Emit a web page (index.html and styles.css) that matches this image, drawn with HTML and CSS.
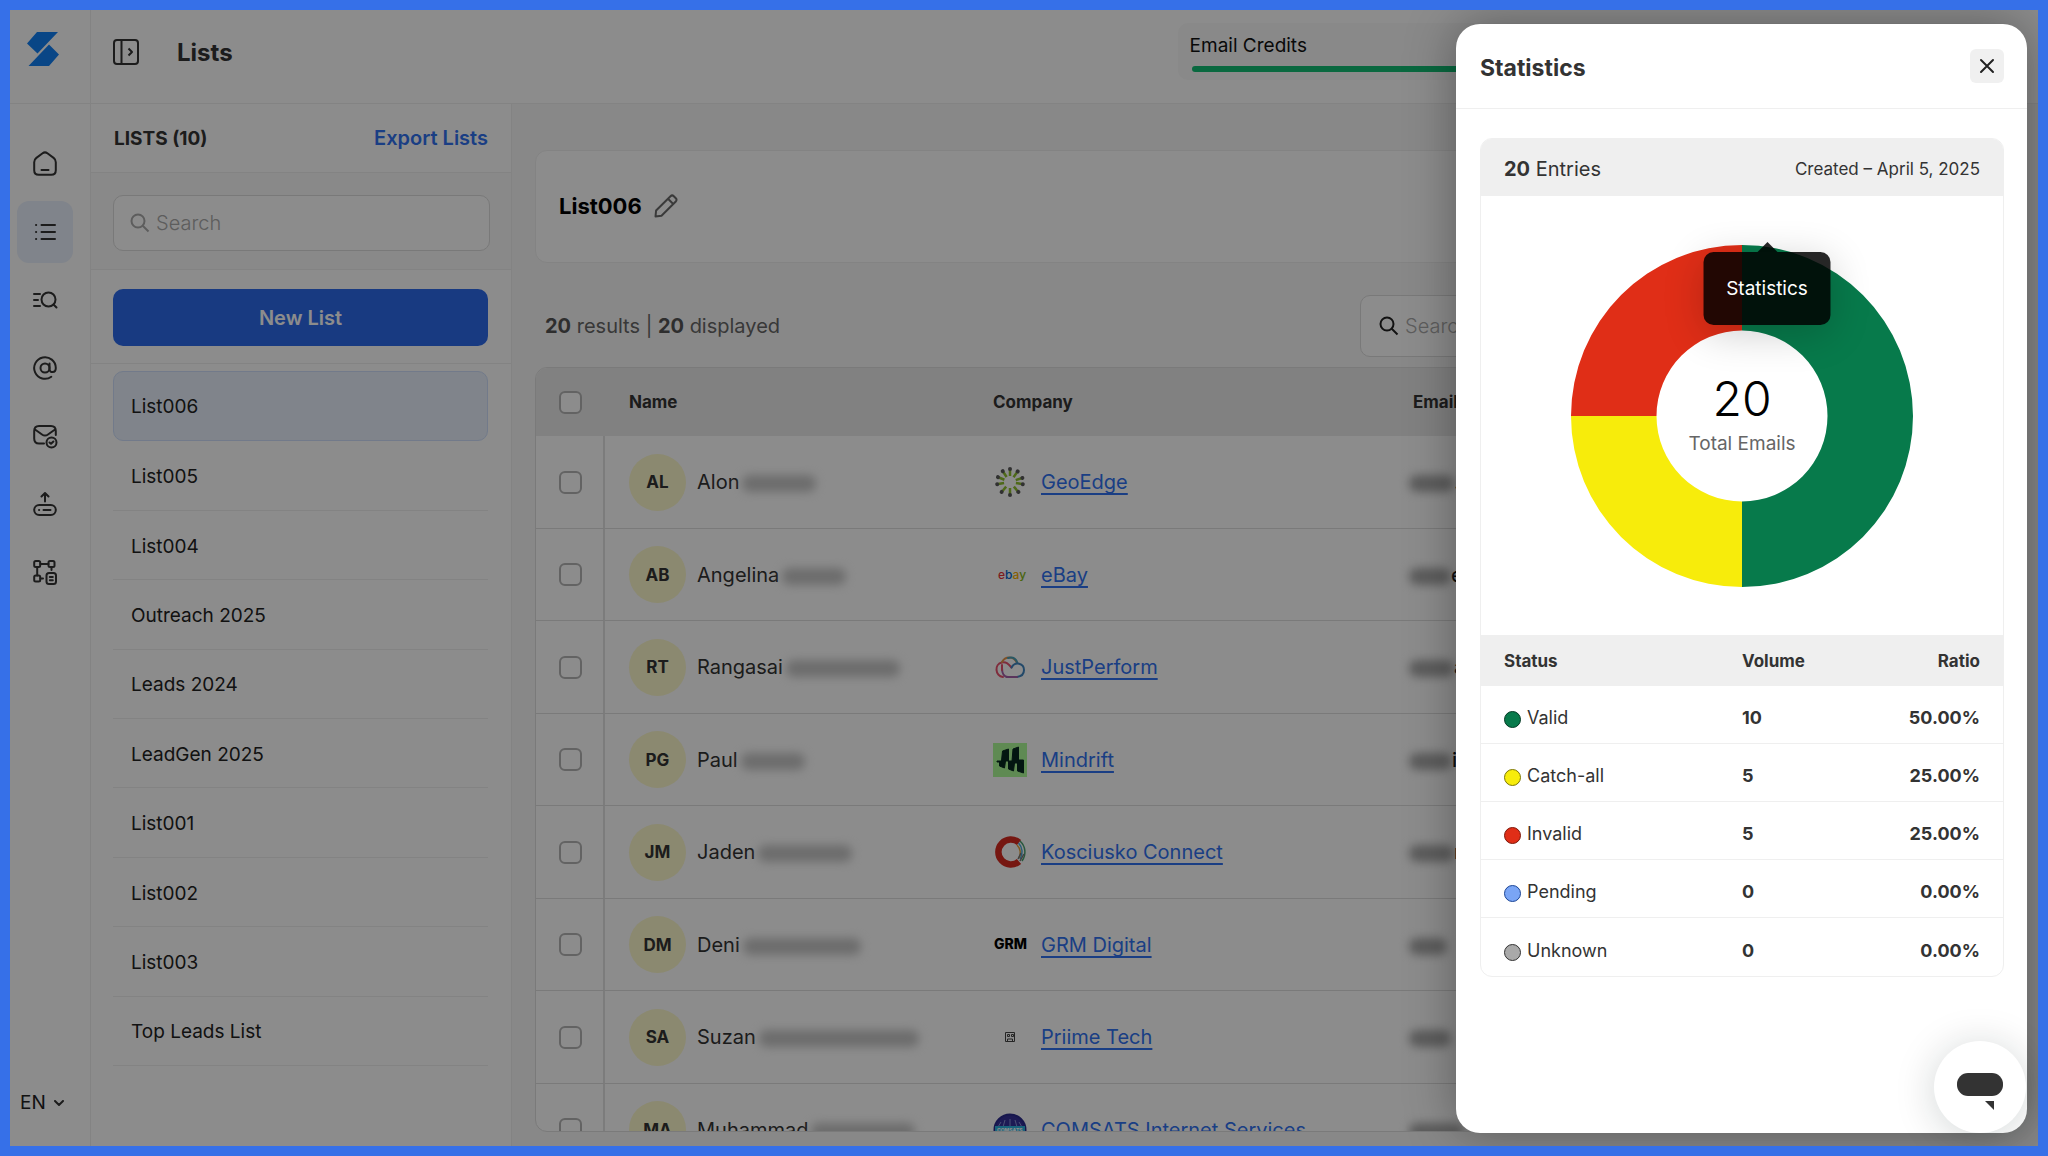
FILE: index.html
```html
<!DOCTYPE html>
<html lang="en">
<head>
<meta charset="utf-8">
<meta name="viewport" content="width=device-width, initial-scale=1">
<title>Lists</title>
<link rel="stylesheet" href="styles.css">
</head>
<body>
<div class="app">
  <aside class="rail">
    <a class="logo" href="#" aria-label="Home page">
      <svg width="32" height="34" viewBox="0 0 32 34"><path d="M10 0H31L10.500 21.500L0 11.500ZM22 12.500L32 22.500L22 34H1.500Z" fill="#1280f5"/></svg>
    </a>
    <nav class="rail-nav" aria-label="Main">
      <a href="#" class="rail-link" aria-label="Dashboard"><svg class="icon" viewBox="0 0 24 24"><path d="M1.200 10.200c0-2 .6-3 2.200-4.300L9.600 1.300c1.600-1.200 3.200-1.200 4.800 0l6.200 4.600c1.600 1.300 2.200 2.300 2.200 4.300v8c0 3-1.600 4.600-4.600 4.600H5.800c-3 0-4.600-1.600-4.600-4.600ZM8.500 18h7"/></svg></a>
      <a href="#" class="rail-link active" aria-label="Lists"><svg class="icon" viewBox="0 0 24 24"><path d="M8.500 5h13.500M8.500 12h13.500M8.500 19h13.500M3 5h.2M3 12h.2M3 19h.2"/></svg></a>
      <a href="#" class="rail-link" aria-label="Search"><svg class="icon" viewBox="0 0 24 24"><circle cx="15.500" cy="11.500" r="7"/><path d="M20.500 16.500l3 3M1 6h6M1 12h4M1 18h6"/></svg></a>
      <a href="#" class="rail-link" aria-label="Email finder"><svg class="icon" viewBox="0 0 24 24"><circle cx="12" cy="12" r="4.500"/><path d="M16.500 7.500v5.500c0 4.300 6.300 4.300 6.300-1A10.800 10.800 0 1 0 18.300 20.800"/></svg></a>
      <a href="#" class="rail-link" aria-label="Email verifier"><svg class="icon" viewBox="0 0 24 24"><path d="M11 19.500H6c-3 0-4.800-1.500-4.800-5V7c0-3.500 1.800-5 4.800-5h12c3 0 4.800 1.500 4.800 5v4M2 5.500l7 5c2 1.400 4 1.400 6 0l7-5"/><circle cx="18.500" cy="18.500" r="5"/><path d="M16.500 18.500l1.500 1.300 2.400-2.300"/></svg></a>
      <a href="#" class="rail-link" aria-label="Import"><svg class="icon" viewBox="0 0 24 24"><rect x="1.200" y="13" width="21.600" height="10" rx="5"/><path d="M10.500 18h7M6 18h.2M12 9.500V1.500M8.500 4.500L12 1l3.500 3.500"/></svg></a>
      <a href="#" class="rail-link" aria-label="Integrations"><svg class="icon" viewBox="0 0 24 24"><rect x="1.200" y="1" width="6" height="6" rx="1.500"/><rect x="15.500" y="1" width="6" height="6" rx="1.500"/><rect x="1.200" y="15.500" width="6" height="6" rx="1.500"/><rect x="13.500" y="13" width="9.500" height="11" rx="2.500"/><path d="M7.500 4h8M4.200 7.500v8M18.500 7.500V10M7.500 18.500H10M16.800 17h3M16.800 20.200h3"/></svg></a>
    </nav>
    <button class="language" type="button">EN <svg width="10" height="6" viewBox="0 0 10 6"><path d="M1 1l4 4 4-4" fill="none" stroke="#333" stroke-width="2" stroke-linecap="round"/></svg></button>
  </aside>

  <header class="topbar">
    <button class="collapse" type="button" aria-label="Expand sidebar"><svg width="26" height="26" viewBox="0 0 26 26" fill="none" stroke="#333" stroke-width="2" stroke-linejoin="round"><rect x="1" y="1" width="24" height="24" rx="3"/><path d="M8.500 1v24M15.500 9.500l3.500 3.500-3.500 3.500"/></svg></button>
    <h1>Lists</h1>
    <div class="credits"><span>Email Credits</span><div class="meter"></div></div>
  </header>

  <section class="lists">
    <div class="lists-head"><h2>LISTS (10)</h2><a href="#">Export Lists</a></div>
    <div class="lists-search">
      <label class="field"><svg width="20" height="20" viewBox="0 0 20 20" fill="none" stroke="#aaa" stroke-width="2"><circle cx="8" cy="8" r="6.500"/><path d="M12.500 12.500l6 6"/></svg><input type="search" placeholder="Search" aria-label="Search lists"></label>
    </div>
    <div class="lists-new"><button type="button">New List</button></div>
    <ul class="list-items">
      <li class="selected"><a href="#">List006</a></li>
      <li><a href="#">List005</a></li>
      <li><a href="#">List004</a></li>
      <li><a href="#">Outreach 2025</a></li>
      <li><a href="#">Leads 2024</a></li>
      <li><a href="#">LeadGen 2025</a></li>
      <li><a href="#">List001</a></li>
      <li><a href="#">List002</a></li>
      <li><a href="#">List003</a></li>
      <li><a href="#">Top Leads List</a></li>
    </ul>
  </section>

  <main class="content">
    <div class="list-title">
      <h2>List006</h2>
      <button type="button" aria-label="Rename list"><svg width="24" height="24" viewBox="0 0 24 24" fill="none" stroke="#6b6b6b" stroke-width="2" stroke-linejoin="round"><path d="M1.500 22.500l.6-6L16.500 2.200c1-1 2.300-1 3.300 0l2 2c1 1 1 2.300 0 3.300L7.500 21.800ZM14 4.800l5.200 5.200"/></svg></button>
    </div>
    <div class="toolbar">
      <p><b>20</b> results | <b>20</b> displayed</p>
      <label class="field field-tall"><svg width="20" height="20" viewBox="0 0 20 20" fill="none" stroke="#222" stroke-width="2"><circle cx="8" cy="8" r="6.500"/><path d="M12.500 12.500l6 6"/></svg><input type="search" placeholder="Search" aria-label="Search results"></label>
    </div>
    <div class="table-box">
      <table class="contacts">
        <thead><tr><th class="c-check"><input type="checkbox" aria-label="Select all"></th><th class="c-name">Name</th><th class="c-company">Company</th><th class="c-email">Email</th></tr></thead>
        <tbody>
          <tr><td class="c-check"><input type="checkbox" aria-label="Select Alon"></td>
            <td><div class="person"><span class="avatar">AL</span><span>Alon</span><i class="redacted" style="width:74px"></i></div></td>
            <td><div class="company"><svg width="34" height="34" viewBox="-17 -17 34 34"><g id="ray"><path d="M0-6V-12" stroke="#8fbf2f" stroke-width="2.500"/><circle cy="-13" r="2" fill="#5a5a5a"/></g><use href="#ray" transform="rotate(36)"/><use href="#ray" transform="rotate(72)"/><use href="#ray" transform="rotate(100)"/><use href="#ray" transform="rotate(140)"/><use href="#ray" transform="rotate(180)"/><use href="#ray" transform="rotate(220)"/><use href="#ray" transform="rotate(260)"/><use href="#ray" transform="rotate(292)"/><use href="#ray" transform="rotate(326)"/></svg><a href="#">GeoEdge</a></div></td>
            <td><div class="email"><i class="redacted" style="width:45px"></i>.</div></td></tr>
          <tr><td class="c-check"><input type="checkbox" aria-label="Select Angelina"></td>
            <td><div class="person"><span class="avatar">AB</span><span>Angelina</span><i class="redacted" style="width:64px"></i></div></td>
            <td><div class="company"><svg width="34" height="34" viewBox="0 0 34 34"><text class="ebay" x="5" y="21"><tspan fill="#e53238">e</tspan><tspan fill="#0064d2">b</tspan><tspan fill="#f5af02">a</tspan><tspan fill="#86b817">y</tspan></text></svg><a href="#">eBay</a></div></td>
            <td><div class="email"><i class="redacted" style="width:42px"></i>e</div></td></tr>
          <tr><td class="c-check"><input type="checkbox" aria-label="Select Rangasai"></td>
            <td><div class="person"><span class="avatar">RT</span><span>Rangasai</span><i class="redacted" style="width:114px"></i></div></td>
            <td><div class="company"><svg width="34" height="34" viewBox="0 0 34 34" fill="none" stroke-width="2" stroke-linecap="round"><path d="M10 27C2 26 1 14 9 12.500c4-.8 6 1 9.500 5" stroke="#e8516e"/><path d="M9 12c3-6 12-6.500 15 1" stroke="#e8944a"/><path d="M15 8c5-1.500 8 1 9.500 5" stroke="#4aa0b8"/><path d="M18.500 17.500C22 11 31 13 31 20c0 4-3 6.500-7 7" stroke="#4186c0"/><path d="M24 27H15c-4 0-6-4-6-9" stroke="#a45fa8"/><path d="M9 15v5" stroke="#e8516e"/></svg><a href="#">JustPerform</a></div></td>
            <td><div class="email"><i class="redacted" style="width:45px"></i>a</div></td></tr>
          <tr><td class="c-check"><input type="checkbox" aria-label="Select Paul"></td>
            <td><div class="person"><span class="avatar">PG</span><span>Paul</span><i class="redacted" style="width:64px"></i></div></td>
            <td><div class="company"><svg width="34" height="34" viewBox="0 0 34 34"><path fill="#aefc98" d="M0 0h34v34H0z"/><path fill="#06281f" stroke="#06281f" stroke-linejoin="round" d="M4 18h4.500l1-10 6-2v12h3.500l1-12 5.500-2v13h5v13l-6-2v-8h-3l-1 8-5-2v-8h-3l-1 7-5-2v-4H4Z"/></svg><a href="#">Mindrift</a></div></td>
            <td><div class="email"><i class="redacted" style="width:43px"></i>i</div></td></tr>
          <tr><td class="c-check"><input type="checkbox" aria-label="Select Jaden"></td>
            <td><div class="person"><span class="avatar">JM</span><span>Jaden</span><i class="redacted" style="width:94px"></i></div></td>
            <td><div class="company"><svg width="34" height="34" viewBox="0 0 34 34" fill="none"><path d="M26 7.500A12.500 12.500 0 1 0 26 26.500" stroke="#d82a20" stroke-width="6.500"/><path d="M27 6a15 15 0 0 1 2 20" stroke="#4ba070" stroke-width="1.500"/><path d="M25.500 8a13 13 0 0 1 1.500 16" stroke="#49a8d8" stroke-width="1.500"/><path d="M24 10a11 11 0 0 1 2 13" stroke="#e8a23a" stroke-width="1.500"/><path d="M31 19l-4 7M28 18l-3 6" stroke="#777" stroke-width="1.500"/></svg><a href="#">Kosciusko Connect</a></div></td>
            <td><div class="email"><i class="redacted" style="width:45px"></i>n</div></td></tr>
          <tr><td class="c-check"><input type="checkbox" aria-label="Select Deni"></td>
            <td><div class="person"><span class="avatar">DM</span><span>Deni</span><i class="redacted" style="width:118px"></i></div></td>
            <td><div class="company"><svg width="34" height="34" viewBox="0 0 34 34"><text class="grm" x="1" y="21">GRM</text></svg><a href="#">GRM Digital</a></div></td>
            <td><div class="email"><i class="redacted" style="width:38px"></i></div></td></tr>
          <tr><td class="c-check"><input type="checkbox" aria-label="Select Suzan"></td>
            <td><div class="person"><span class="avatar">SA</span><span>Suzan</span><i class="redacted" style="width:160px"></i></div></td>
            <td><div class="company"><svg width="34" height="34" viewBox="0 0 34 34" fill="none" stroke="#444"><path d="M12.500 12.500h9v9h-9zM14.500 14.500h2v2h-2zM18.500 14.500h2v2h-2zM14.500 21v-2h5v2"/></svg><a href="#">Priime Tech</a></div></td>
            <td><div class="email"><i class="redacted" style="width:42px"></i></div></td></tr>
          <tr><td class="c-check"><input type="checkbox" aria-label="Select Muhammad"></td>
            <td><div class="person"><span class="avatar">MA</span><span>Muhammad</span><i class="redacted" style="width:104px"></i></div></td>
            <td><div class="company"><svg width="34" height="34" viewBox="0 0 34 34"><circle cx="17" cy="17" r="15.500" fill="#35309a" stroke="#2b2a8c" stroke-width="2"/><path d="M17 6v8M12 7l-2 7M22 7l2 7M8 9l-3 5M26 9l3 5" stroke="#8b93d8"/><path fill="#2fb4e0" d="M2 13h30v13H2z"/><text class="comsats" x="4" y="19">COMSATS</text></svg><a href="#">COMSATS Internet Services</a></div></td>
            <td><div class="email"><i class="redacted" style="width:55px"></i></div></td></tr>
        </tbody>
      </table>
    </div>
  </main>

  <div class="backdrop"></div>

  <section class="panel" role="dialog" aria-labelledby="panel-title">
    <header class="panel-head">
      <h2 id="panel-title">Statistics</h2>
      <button type="button" aria-label="Close"><svg width="16" height="16" viewBox="0 0 16 16"><path d="M2 2l12 12M14 2L2 14" stroke="#222" stroke-width="2" stroke-linecap="round"/></svg></button>
    </header>
    <div class="stats">
      <div class="stats-head"><span class="entries"><b>20</b> Entries</span><span class="created">Created – April 5, 2025</span></div>
      <div class="chart">
        <svg class="donut" width="342" height="342" viewBox="-171 -171 342 342" role="img" aria-label="Half valid, a quarter catch-all, a quarter invalid">
          <path fill="#077a4b" d="M0-171A171 171 0 0 1 0 171V85.500A85.500 85.500 0 0 0 0-85.500Z"/>
          <path fill="#f7ec0b" d="M0 171A171 171 0 0 1-171 0H-85.500A85.500 85.500 0 0 0 0 85.500Z"/>
          <path fill="#e02e17" d="M-171 0A171 171 0 0 1 0-171V-85.500A85.500 85.500 0 0 0-85.500 0Z"/>
        </svg>
        <div class="total"><strong>20</strong><span>Total Emails</span></div>
        <div class="tooltip" role="tooltip">Statistics</div>
      </div>
      <table class="status">
        <thead><tr><th>Status</th><th>Volume</th><th>Ratio</th></tr></thead>
        <tbody>
          <tr><td><i class="dot valid"></i>Valid</td><td>10</td><td>50.00%</td></tr>
          <tr><td><i class="dot catch-all"></i>Catch-all</td><td>5</td><td>25.00%</td></tr>
          <tr><td><i class="dot invalid"></i>Invalid</td><td>5</td><td>25.00%</td></tr>
          <tr><td><i class="dot pending"></i>Pending</td><td>0</td><td>0.00%</td></tr>
          <tr><td><i class="dot unknown"></i>Unknown</td><td>0</td><td>0.00%</td></tr>
        </tbody>
      </table>
    </div>
    <button class="chat" type="button" aria-label="Open chat"><svg width="46" height="37" viewBox="0 0 46 37" fill="#333"><rect width="46" height="23" rx="11"/><path d="M28 28h9v9Z"/></svg></button>
  </section>
</div>
</body>
</html>
```
FILE: styles.css
```css
* { box-sizing: border-box; }
body, h1, h2, p, ul { margin: 0; padding: 0; }
body { font-family: Inter, "Liberation Sans", sans-serif; font-size: 19px; color: #333; }
button, input { font: inherit; color: inherit; }
button { border: 0; padding: 0; background: none; }
a { color: #3072f0; }
svg { display: block; flex: none; }

.app {
  position: relative;
  display: grid;
  grid-template: 94px minmax(0, 1fr) / 81px 421px minmax(0, 1fr);
  height: 100vh;
  border: 10px solid #3670e8;
  background: #fff;
  overflow: hidden;
}

/* Icon rail */
.rail { grid-row: 1 / 3; display: flex; flex-direction: column; border-right: 1px solid #efefef; }
.logo { display: flex; height: 94px; padding: 22px 0 0 17px; border-bottom: 1px solid #efefef; }
.rail-nav { display: flex; flex-direction: column; gap: 6px; padding: 29px 7px 0; }
.rail-link { display: grid; place-items: center; width: 56px; height: 62px; border-radius: 12px; }
.rail-link.active { background: #e9f0fd; }
.icon { width: 24px; height: 24px; fill: none; stroke: #333; stroke-width: 2; stroke-linecap: round; stroke-linejoin: round; overflow: visible; }
.language { display: flex; align-items: center; gap: 8px; margin-top: auto; padding: 0 0 32px 10px; color: #222; }

/* Top bar */
.topbar { grid-column: 2 / 4; display: flex; align-items: flex-start; padding: 13px 24px 0 22px; border-bottom: 1px solid #efefef; }
.collapse { margin: 16px 38px 0 0; }
.topbar h1 { margin-top: 14px; font-size: 24px; line-height: 32px; }
.credits { width: 44%; height: 57px; margin-left: auto; padding: 12px 12px 0; border-radius: 10px; background: #f9f9f9; line-height: 22px; color: #111; }
.meter { height: 6px; margin: 9px 0 0 2px; border-radius: 3px; background: #12bd74; }

/* List column */
.lists { display: flex; flex-direction: column; border-right: 1px solid #efefef; }
.lists-head { display: flex; align-items: center; justify-content: space-between; height: 69px; padding: 0 23px; border-bottom: 1px solid #efefef; }
.lists-head h2 { font-size: 19px; }
.lists-head a { font-size: 20px; font-weight: 600; text-decoration: none; }
.lists-search { padding: 22px 21px 18px 22px; background: #f9f9f9; border-bottom: 1px solid #efefef; }
.field { display: flex; align-items: center; gap: 6px; height: 56px; padding: 0 16px; border: 1px solid #dcdcdc; border-radius: 10px; background: #fff; }
.field input { flex: 1; min-width: 0; border: 0; padding: 0; background: none; font-size: 20px; font-weight: 300; outline: 0; }
.field input::placeholder { color: #aaa; opacity: 1; }
.lists-new { padding: 19px 23px 17px 22px; border-bottom: 1px solid #efefef; }
.lists-new button { display: block; width: 100%; height: 57px; border-radius: 10px; background: #2c6bec; color: #fff; font-size: 20px; font-weight: 600; }
.list-items { flex: 1; display: flex; flex-direction: column; padding: 5px 23px 80px 22px; list-style: none; }
.list-items li { flex: 1; display: flex; border-bottom: 1px solid #efefef; }
.list-items a { flex: 1; display: flex; align-items: center; padding: 2px 18px 0; color: #222; text-decoration: none; }
.list-items .selected { margin-top: 2px; border: 1px solid #cfdffc; border-radius: 10px; background: #e9f0fd; }
.list-items .selected a { padding: 0 17px; }

/* Contacts */
.content { display: flex; flex-direction: column; min-height: 0; padding: 46px 24px 14px 23px; background: #f8f8f8; }
.list-title { display: flex; align-items: center; gap: 12px; height: 113px; padding: 0 23px 2px; border: 1px solid #efefef; border-radius: 12px; background: #fff; }
.list-title h2 { font-size: 22px; line-height: 28px; color: #000; }
.toolbar { display: flex; align-items: center; justify-content: space-between; padding: 32px 0 10px; }
.toolbar p { padding-left: 10px; font-size: 20px; color: #666; }
.toolbar b { color: #555; }
.field-tall { width: 654px; height: 62px; padding: 0 18px; }
.table-box { flex: 1; min-height: 0; overflow: hidden; border: 1px solid #dedede; border-radius: 12px; background: #fff; }
.contacts { width: 100%; border-collapse: separate; border-spacing: 0; table-layout: fixed; font-size: 20px; }
.contacts th { height: 68px; padding: 0 24px; background: #ececec; text-align: left; font-size: 17px; }
.contacts td { height: 92px; padding: 0 24px; border-bottom: 1px solid #dedede; }
.contacts tr:nth-child(odd) td { height: 93px; }
.contacts .c-check { width: 69px; padding: 0 0 0 23px; }
.contacts td.c-check { border-right: 2px solid #e2e2e2; }
.c-name { width: 364px; }
.c-company { width: 420px; }
.contacts input { appearance: none; display: block; width: 23px; height: 23px; margin: 0; border: 2px solid #b4b4b4; border-radius: 6px; background: #fff; }
.person { display: flex; align-items: center; gap: 3px; }
.avatar { display: grid; place-items: center; width: 57px; height: 57px; margin-right: 8px; border-radius: 50%; background: #fdf9cc; font-size: 17px; font-weight: 700; }
.company { display: flex; align-items: center; gap: 14px; }
.company a { text-underline-offset: 4px; text-decoration-thickness: 2px; text-decoration-skip-ink: none; }
.email { display: flex; align-items: center; color: #000; font-weight: 500; }
.email .redacted { margin-left: -4px; background: #a8a8a8; }
.redacted { height: 17px; margin-top: 3px; border-radius: 8px; background: #c6c6c6; filter: blur(5px); }
.ebay { font-size: 12px; font-weight: 500; }
.grm { font-size: 14px; font-weight: 800; }
.comsats { font-size: 5px; font-weight: 800; fill: #fff; }

.backdrop { position: absolute; inset: 0; background: rgba(0, 0, 0, .45); }

/* Statistics panel */
.panel { position: absolute; top: 14px; right: 11px; bottom: 13px; width: 571px; border-radius: 24px; background: #fff; box-shadow: 0 0 50px rgba(0, 0, 0, .35); }
.panel-head { display: flex; align-items: center; justify-content: space-between; height: 85px; padding: 0 23px 0 24px; border-bottom: 1px solid #efefef; }
.panel-head h2 { padding-top: 3px; font-size: 23px; }
.panel-head button { display: grid; place-items: center; width: 34px; height: 34px; border-radius: 6px; background: #f0f0f0; }
.stats { margin: 29px 23px 0 24px; overflow: hidden; border: 1px solid #efefef; border-radius: 12px; }
.stats-head { display: flex; align-items: center; justify-content: space-between; height: 57px; padding: 2px 23px 0; background: #efefef; }
.entries { font-size: 20px; }
.created { font-size: 17px; }
.chart { position: relative; display: grid; place-items: center; padding: 49px 0 48px; }
.donut, .total { grid-area: 1 / 1; }
.total { display: flex; flex-direction: column; align-items: center; }
.total strong { font-size: 48px; line-height: 56px; font-weight: 300; color: #000; }
.total span { line-height: 34px; color: #666; }
.tooltip { position: absolute; left: calc(50% + 25px); top: 56px; width: 127px; line-height: 73px; transform: translateX(-50%); border-radius: 10px; background: rgba(0, 0, 0, .85); color: #fff; text-align: center; box-shadow: 0 8px 40px rgba(0, 0, 0, .2); }
.tooltip::before { content: ""; position: absolute; left: 50%; bottom: 100%; transform: translateX(-50%); border: solid transparent; border-width: 0 10px 10px; border-bottom-color: rgba(0, 0, 0, .85); }
.status { width: 100%; table-layout: fixed; border-collapse: separate; border-spacing: 0; font-size: 18px; }
.status th { height: 51px; padding: 0; background: #efefef; text-align: left; font-size: 17px; }
.status td { height: 58px; padding: 6px 0 0; border-bottom: 1px solid #efefef; font-weight: 700; }
.status tr:last-child td { border-bottom: 0; }
.status td:first-child { font-weight: 400; }
.status th:first-child, .status td:first-child { width: 50%; padding-left: 23px; }
.status th:last-child, .status td:last-child { padding-right: 23px; text-align: right; }
.dot { display: inline-block; width: 17px; height: 17px; margin-right: 6px; border: 1px solid; border-radius: 50%; vertical-align: -4px; }
.valid { background: #077a4b; border-color: #033a24; }
.catch-all { background: #f7ec0b; border-color: #7d7705; }
.invalid { background: #e02e17; border-color: #7d170a; }
.pending { background: #7aa5f5; border-color: #1b4596; }
.unknown { background: #a9a9a9; border-color: #333; }
.chat { position: absolute; right: 1px; bottom: 0; display: grid; place-items: center; width: 92px; height: 92px; padding-top: 9px; border-radius: 50%; background: #fff; box-shadow: 0 4px 40px rgba(0, 30, 30, .18); }
```
